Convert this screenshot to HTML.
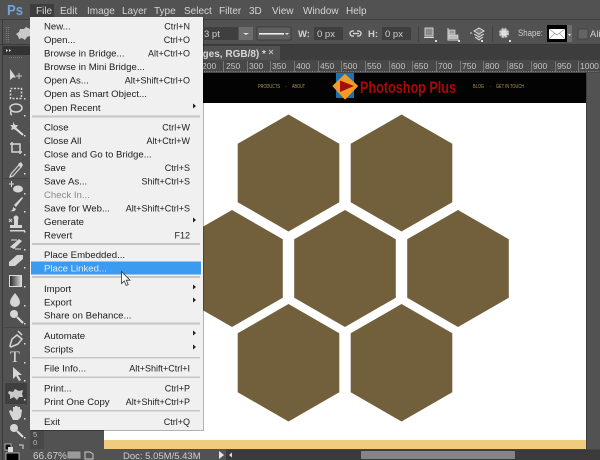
<!DOCTYPE html>
<html><head><meta charset="utf-8"><style>
html,body{margin:0;padding:0;background:#535353;width:600px;height:460px;overflow:hidden}
svg{display:block;filter:blur(.35px)}
text{font-family:"Liberation Sans",sans-serif}
.m text{font-size:9.6px;fill:#1c1c1c}
.m .r{text-anchor:end;font-size:9px}
.t{font-size:10px;fill:#d4d4d4}
.o{font-size:9.5px;fill:#d0d0d0}
.ru text{font-size:8.5px;fill:#c4c4c4}
.ic{fill:none;stroke:#d6d6d6;stroke-width:1.5}
.if{fill:#d6d6d6}
</style></head><body>
<svg width="600" height="460" viewBox="0 0 600 460" xmlns="http://www.w3.org/2000/svg">
<rect width="600" height="460" fill="#525252"/>
<!-- top bar -->
<rect x="0" y="19" width="600" height="1" fill="#3e3e3e"/>
<rect x="0" y="44" width="600" height="1" fill="#3a3a3a"/>
<text x="7" y="15" textLength="16" lengthAdjust="spacingAndGlyphs" style="font-size:15px;font-weight:bold;fill:#6ea5d6">Ps</text>
<rect x="30" y="4" width="24" height="14" fill="#3d3d3d"/>
<text x="36" y="14" class="t">File</text><text x="60" y="14" class="t">Edit</text><text x="87" y="14" class="t">Image</text><text x="122" y="14" class="t">Layer</text><text x="154" y="14" class="t">Type</text><text x="184" y="14" class="t">Select</text><text x="219" y="14" class="t">Filter</text><text x="249" y="14" class="t">3D</text><text x="272" y="14" class="t">View</text><text x="303" y="14" class="t">Window</text><text x="346" y="14" class="t">Help</text>
<!-- options bar -->
<rect x="204" y="27" width="34" height="13" fill="#3f3f3f"/>
<text x="204" y="37" class="o">3 pt</text>
<rect x="239" y="27" width="14" height="13" fill="#6d6d6d"/>
<path d="M243 33h6l-3 2z" fill="#e0e0e0"/>
<rect x="257" y="27" width="34" height="13" rx="1" fill="#5f5f5f" stroke="#3c3c3c"/>
<rect x="259" y="33" width="25" height="1.6" fill="#eee"/>
<path d="M285 33h4l-2 2z" fill="#e0e0e0"/>
<text x="298" y="37" class="o" style="font-weight:bold">W:</text>
<rect x="314" y="27" width="29" height="13" fill="#3f3f3f"/>
<text x="317" y="37" class="o">0 px</text>
<path d="M354 31h-1.500a2.500 2.500 0 0 0 0 5h1.500M357 31h1.500a2.500 2.500 0 0 1 0 5h-1.500M353 33.500h6" fill="none" stroke="#ddd" stroke-width="1.300"/>
<text x="368" y="37" class="o" style="font-weight:bold">H:</text>
<rect x="382" y="27" width="29" height="13" fill="#3f3f3f"/>
<text x="385" y="37" class="o">0 px</text>
<rect x="418" y="26" width="1" height="16" fill="#424242"/>
<rect x="425" y="28" width="8" height="8" fill="#8a8a8a" stroke="#ccc"/>
<rect x="424" y="37" width="10" height="1" fill="#ddd"/>
<rect x="435" y="40" width="2" height="2" fill="#ddd"/>
<path d="M448 28v12h11" fill="none" stroke="#ddd"/>
<rect x="449" y="30" width="6" height="4" fill="#999" stroke="#ddd" stroke-width=".7"/>
<rect x="449" y="35" width="9" height="3.500" fill="#bbb" stroke="#ddd" stroke-width=".7"/>
<rect x="458" y="40" width="2" height="2" fill="#ddd"/>
<path d="M474 31l5-3 5 3-5 3zM474 34l5 3 5-3M475 37l4 3 4-3M470 33h2" fill="#777" stroke="#ddd"/>
<rect x="481" y="40" width="2" height="2" fill="#ddd"/>
<rect x="492" y="26" width="1" height="16" fill="#424242"/>
<circle cx="504" cy="33" r="3.500" fill="#fff" stroke="#ccc" stroke-width="3" stroke-dasharray="2 .8"/>
<circle cx="504" cy="33" r="2" fill="#ddd"/>
<rect x="509" y="40" width="2" height="2" fill="#ddd"/>
<text x="518" y="36" textLength="25" lengthAdjust="spacingAndGlyphs" class="o">Shape:</text>
<rect x="547" y="25" width="20" height="17" fill="#000"/>
<rect x="549" y="29" width="16" height="10" fill="#fff"/>
<path d="M549 29l8 6 8-6M549 39l6-6M565 39l-6-6" fill="none" stroke="#999" stroke-width=".7"/>
<rect x="567" y="25" width="5" height="17" fill="#6d6d6d"/>
<path d="M568 34h3l-1.500 2z" fill="#eee"/>
<rect x="578" y="29" width="10" height="10" rx="1" fill="#646464" stroke="#444"/>
<text x="590" y="37" class="o">Ali</text>
<path d="M6.500 27v15M8.500 27v15" stroke="#777" stroke-dasharray="1 1"/>
<!-- tab bar -->
<rect x="30" y="45" width="570" height="15" fill="#3d3d3d"/>
<rect x="30" y="46" width="250" height="14" fill="#515151"/>
<text x="197" y="57" style="font-size:10px;font-weight:bold;fill:#d8d8d8">ages, RGB/8) *</text>
<path d="M269 50l4 4M273 50l-4 4" stroke="#bbb" stroke-width="1"/>
<!-- ruler -->
<rect x="30" y="60" width="570" height="13" fill="#484848"/>
<path stroke="#777" fill="none" d="M223.500 61v11M247.500 61v11M270.500 61v11M294.500 61v11M318.500 61v11M341.500 61v11M365.500 61v11M389.500 61v11M412.500 61v11M436.500 61v11M460.500 61v11M483.500 61v11M507.500 61v11M531.500 61v11M555.500 61v11M578.500 61v11"/>
<path d="M204 71.500H600" stroke="#8a8a8a" stroke-dasharray="1 1.400"/>
<g class="ru">
<text x="202" y="69">200</text><text x="226" y="69">250</text><text x="249" y="69">300</text><text x="272" y="69">350</text><text x="296" y="69">400</text><text x="320" y="69">450</text><text x="343" y="69">500</text><text x="367" y="69">550</text><text x="391" y="69">600</text><text x="414" y="69">650</text><text x="438" y="69">700</text><text x="462" y="69">750</text><text x="485" y="69">800</text><text x="509" y="69">850</text><text x="533" y="69">900</text><text x="557" y="69">950</text><text x="580" y="69">1000</text>
</g>
<!-- vertical ruler -->
<rect x="30" y="73" width="14" height="376" fill="#484848"/>
<text x="33" y="437" style="font-size:7.5px;fill:#bbb">5</text>
<text x="33" y="445" style="font-size:7.5px;fill:#bbb">0</text>
<!-- canvas -->
<rect x="104" y="73" width="483" height="376" fill="#fff"/>
<rect x="104" y="73" width="483" height="30" fill="#030303"/>
<rect x="104" y="440" width="483" height="9" fill="#f2cc7e"/>
<rect x="586" y="73" width="1" height="376" fill="#3e3e3e"/>
<rect x="336" y="73" width="18" height="25" fill="#1a72b0"/>
<path d="M345 74.500l12.500 11.500-12.500 13-12-13z" fill="#f39a26" stroke="#f39a26" stroke-linejoin="round"/>
<path d="M340 80.500l14 5.500-14 6z" fill="#a50c0c"/>
<text x="360" y="93" textLength="96" lengthAdjust="spacingAndGlyphs" style="font-size:17px;font-weight:bold;fill:#ad0606">Photoshop Plus</text>
<g style="font-size:5px;fill:#b89a58">
<text x="258" y="88" textLength="22" lengthAdjust="spacingAndGlyphs">PRODUCTS</text>
<text x="285" y="88">·</text>
<text x="292" y="88" textLength="13" lengthAdjust="spacingAndGlyphs">ABOUT</text>
<text x="473" y="88" textLength="11" lengthAdjust="spacingAndGlyphs">BLOG</text>
<text x="490" y="88">·</text>
<text x="496" y="88" textLength="28" lengthAdjust="spacingAndGlyphs">GET IN TOUCH</text>
</g>
<!-- hexagons -->
<g fill="#72603c">
<path d="M288.500 114.500L339.300 143.800V202.200L288.500 231.500L237.700 202.200V143.800Z"/>
<path d="M401.500 114.500L452.300 143.800V202.200L401.500 231.500L350.700 202.200V143.800Z"/>
<path d="M232 210L282.800 239.300V297.700L232 327L181.200 297.700V239.300Z"/>
<path d="M345 210L395.800 239.300V297.700L345 327L294.200 297.700V239.300Z"/>
<path d="M458 210L508.800 239.300V297.700L458 327L407.200 297.700V239.300Z"/>
<path d="M288.500 304L339.300 333.300V392.300L288.500 421.500L237.700 392.300V333.300Z"/>
<path d="M401.500 304L452.300 333.300V392.300L401.500 421.500L350.700 392.300V333.300Z"/>
</g>
<!-- status bar -->
<rect x="0" y="449.500" width="600" height="11" fill="#525252"/>
<rect x="226" y="449.500" width="374" height="11" fill="#3b3b3b"/>
<rect x="361" y="451" width="154" height="8" rx="1" fill="#858585"/>
<path d="M229 455l3-2.500v5z" fill="#ddd"/>
<path d="M219 451l5 4-5 4z" fill="#e6e6e6"/>
<text x="33" y="459" style="font-size:10px;fill:#cfcfcf">66.67%</text>
<rect x="67" y="451" width="14" height="8" fill="#9a9a9a" stroke="#333" stroke-width=".6"/>
<path d="M85 452h5l3 2v5h-8z" fill="none" stroke="#ccc"/>
<text x="123" y="459" style="font-size:9.500px;fill:#cfcfcf">Doc: 5.05M/5.43M</text>
<!-- left tool panel -->
<rect x="2" y="20" width="1" height="440" fill="#3a3a3a"/>
<rect x="3" y="46" width="27" height="9" fill="#333"/>
<path d="M6 49l2 1.500-2 1.500zM9 49l2 1.500-2 1.500z" fill="#ddd"/>
<path d="M9 57.500H23" stroke="#777" stroke-dasharray="1 1"/>
<rect x="4" y="178" width="25" height="1" fill="#444"/>
<rect x="4" y="327" width="25" height="1" fill="#444"/>
<!-- options custom shape icon -->
<path d="M20 29l4 0 2-2 4 2 1 4-1 3-3 1-2 3-3-2-3 1-1-3-2-2 3-2z" fill="#c9c9c9"/>
<!-- tools -->
<path d="M10 69l0 11 3-2.500 3 0z" class="if"/><path d="M19 73v6M16 76h6" stroke="#ccc"/>
<rect x="10.500" y="88.500" width="11" height="10" class="ic" stroke-dasharray="2 1.500"/>
<ellipse cx="16" cy="108" rx="6" ry="4" class="ic"/><path d="M11 111q-1 3 1 4" class="ic"/>
<path d="M15 128l8 7" stroke="#ddd" stroke-width="2"/><path d="M13 122l2 3 3 0-2 3 1 3-3-2-3 1 1-3-2-2 3 0z" class="if"/>
<path d="M12 142v10h10M10 144h10v10" class="ic"/>
<path d="M11 174l8-9 2 2-8 9-3 1z" class="ic" style="stroke-width:1.200"/><path d="M18 164l3-2 2 3-2 3z" class="if"/>
<path d="M9 184h5M11.500 181v6" stroke="#ddd"/><ellipse cx="18" cy="189" rx="5" ry="3.500" class="if"/>
<path d="M14 205l8-8 1 1-7 9z" class="if"/><path d="M10 211q3 0 3-4l3 2q-1 3-6 2z" class="if"/>
<rect x="14" y="219" width="4" height="6" class="if"/><circle cx="16" cy="218" r="2.500" class="if"/><rect x="10" y="225" width="12" height="3" class="if"/><rect x="10" y="230" width="15" height="1.500" class="if"/><path d="M9 219l3 3M12 219l-3 3" stroke="#ddd"/>
<path d="M10 247l9-8 3 2-8 8z" class="if"/><path d="M11 240h6M15 249h6" stroke="#ddd"/>
<path d="M9 262l8-7 6 0 0 4-8 7-6 0z" class="if"/>
<defs><linearGradient id="g" x1="0" x2="1"><stop offset="0" stop-color="#222"/><stop offset="1" stop-color="#ddd"/></linearGradient></defs>
<rect x="9.500" y="275.500" width="12" height="11" fill="url(#g)" stroke="#ddd"/>
<path d="M15 293q-5 6-5 9a5 5 0 0 0 10 0q0-3-5-9z" class="if"/>
<circle cx="14" cy="314" r="4" class="if"/><path d="M17 317l6 6" stroke="#ddd" stroke-width="2"/>
<path d="M10 346l2-7 5-4 5 4-4 5-7 3zM18 331l4 4" class="ic"/>
<text x="10" y="362" style="font-family:'Liberation Serif',serif;font-size:16px;fill:#ddd">T</text>
<path d="M13 367v12l3-3 3 5 2-1-3-5h4z" class="if"/>
<rect x="5" y="383" width="22" height="21" fill="#3f3f3f"/>
<path d="M9 391l4 1 2-3 4 2 4-1-1 4 1 3-4 0-2 3-3-3-4 2 0-4-2-2z" fill="#c9c9c9"/>
<path d="M10 414l-1-3 2-1 2 2 0-5 2 0 0-1 2 0 1 1 2 0 0 2 2 1-1 7-3 3h-5z" class="if"/>
<circle cx="14" cy="428" r="4" class="if"/><path d="M17 431l6 6" stroke="#ddd" stroke-width="2"/>
<rect x="5" y="444" width="6" height="6" fill="#111" stroke="#ddd" stroke-width=".7"/><rect x="8" y="447" width="5" height="5" fill="#ddd"/>
<path d="M19 445h4v4" fill="none" stroke="#ddd"/>
<rect x="6" y="453" width="13" height="8" fill="#000" stroke="#ddd" stroke-width=".7"/>
<g fill="#ddd"><rect x="24" y="98" width="1.500" height="1.500"/><rect x="24" y="115" width="1.500" height="1.500"/><rect x="24" y="135" width="1.500" height="1.500"/><rect x="24" y="154" width="1.500" height="1.500"/><rect x="24" y="173" width="1.500" height="1.500"/><rect x="24" y="193" width="1.500" height="1.500"/><rect x="24" y="211" width="1.500" height="1.500"/><rect x="24" y="231" width="1.500" height="1.500"/><rect x="24" y="249" width="1.500" height="1.500"/><rect x="24" y="267" width="1.500" height="1.500"/><rect x="24" y="286" width="1.500" height="1.500"/><rect x="24" y="305" width="1.500" height="1.500"/><rect x="24" y="323" width="1.500" height="1.500"/><rect x="24" y="343" width="1.500" height="1.500"/><rect x="24" y="362" width="1.500" height="1.500"/><rect x="24" y="380" width="1.500" height="1.500"/><rect x="24" y="399" width="1.500" height="1.500"/><rect x="24" y="418" width="1.500" height="1.500"/><rect x="24" y="437" width="1.500" height="1.500"/></g>
<!-- menu -->
<rect x="31" y="18" width="173" height="413" fill="#000" opacity=".3"/>
<rect x="30" y="17" width="173" height="413" fill="#f0f0f0"/>
<rect x="31" y="261.500" width="170" height="13" fill="#3a9bf0"/>
<g fill="#c6c6c6">
<rect x="32" y="115.500" width="168" height="2"/><rect x="32" y="243" width="168" height="2"/><rect x="32" y="276" width="168" height="2"/><rect x="32" y="322.500" width="168" height="2"/><rect x="32" y="357" width="168" height="1.500"/><rect x="32" y="376.500" width="168" height="1.500"/><rect x="32" y="410" width="168" height="1.500"/>
</g>
<g class="m">
<text x="44" y="29.500">New...</text><text x="190" y="29.500" class="r">Ctrl+N</text>
<text x="44" y="43">Open...</text><text x="190" y="43" class="r">Ctrl+O</text>
<text x="44" y="56.500">Browse in Bridge...</text><text x="190" y="56.500" class="r">Alt+Ctrl+O</text>
<text x="44" y="70">Browse in Mini Bridge...</text>
<text x="44" y="83.500">Open As...</text><text x="190" y="83.500" class="r">Alt+Shift+Ctrl+O</text>
<text x="44" y="97">Open as Smart Object...</text>
<text x="44" y="111">Open Recent</text>
<text x="44" y="130.500">Close</text><text x="190" y="130.500" class="r">Ctrl+W</text>
<text x="44" y="144">Close All</text><text x="190" y="144" class="r">Alt+Ctrl+W</text>
<text x="44" y="157.500">Close and Go to Bridge...</text>
<text x="44" y="171">Save</text><text x="190" y="171" class="r">Ctrl+S</text>
<text x="44" y="184.500">Save As...</text><text x="190" y="184.500" class="r">Shift+Ctrl+S</text>
<text x="44" y="198" style="fill:#8a8a8a">Check In...</text>
<text x="44" y="211.500">Save for Web...</text><text x="190" y="211.500" class="r">Alt+Shift+Ctrl+S</text>
<text x="44" y="225">Generate</text>
<text x="44" y="238.500">Revert</text><text x="190" y="238.500" class="r">F12</text>
<text x="44" y="258">Place Embedded...</text>
<text x="44" y="271.500" style="fill:#dfeeff">Place Linked...</text>
<text x="44" y="292">Import</text>
<text x="44" y="305.500">Export</text>
<text x="44" y="318.500">Share on Behance...</text>
<text x="44" y="339">Automate</text>
<text x="44" y="352.500">Scripts</text>
<text x="44" y="371.500">File Info...</text><text x="190" y="371.500" class="r">Alt+Shift+Ctrl+I</text>
<text x="44" y="391.500">Print...</text><text x="190" y="391.500" class="r">Ctrl+P</text>
<text x="44" y="405">Print One Copy</text><text x="190" y="405" class="r">Alt+Shift+Ctrl+P</text>
<text x="44" y="425">Exit</text><text x="190" y="425" class="r">Ctrl+Q</text>
</g>
<g fill="#222">
<path d="M193 103.500l3 2.500-3 2.500z"/><path d="M193 217.500l3 2.500-3 2.500z"/><path d="M193 284.500l3 2.500-3 2.500z"/><path d="M193 297.500l3 2.500-3 2.500z"/><path d="M193 330.500l3 2.500-3 2.500z"/><path d="M193 344.500l3 2.500-3 2.500z"/>
</g>
<!-- cursor -->
<path d="M121.500 271.500v12l2.700-2.600 2 4.600 2-.9-2-4.400h3.800z" fill="#fff" stroke="#333" stroke-width=".8"/>
</svg>
</body></html>
